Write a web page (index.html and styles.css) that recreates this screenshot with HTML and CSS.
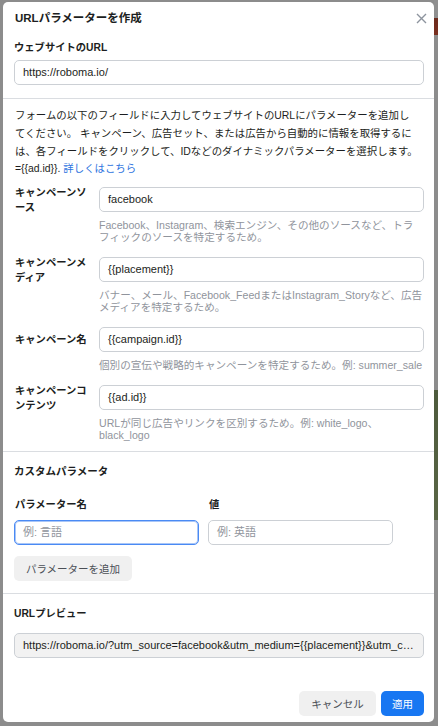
FILE: index.html
```html
<!DOCTYPE html>
<html lang="ja">
<head>
  <meta charset="UTF-8">
  <title>URLパラメーターを作成</title>
  <link rel="stylesheet" href="styles.css">
</head>
<body>
  <div class="modal">
    <!-- en-tête -->
    <div class="header">
      <h2>URLパラメーターを作成</h2>
      <button class="close" aria-label="閉じる">
        <svg width="11" height="11" viewBox="0 0 11 11"><path d="M1 1 L10 10 M10 1 L1 10" stroke="#8d949e" stroke-width="1.4" fill="none"/></svg>
      </button>
    </div>

    <div class="section site">
      <label class="lbl">ウェブサイトのURL</label>
      <div class="input">https://roboma.io/</div>
    </div>

    <div class="section fields">
      <p class="intro">フォームの以下のフィールドに入力してウェブサイトのURLにパラメーターを追加し<br>てください。 キャンペーン、広告セット、または広告から自動的に情報を取得するには、各フィールドをクリックして、IDなどのダイナミックパラメーターを選択します。={{ad.id}}. <a href="#">詳しくはこちら</a></p>

      <div class="row">
        <label class="lbl">キャンペーンソース</label>
        <div class="input">facebook</div>
        <div class="help">Facebook、Instagram、検索エンジン、その他のソースなど、トラフィックのソースを特定するため。</div>
      </div>
      <div class="row">
        <label class="lbl">キャンペーンメディア</label>
        <div class="input">{{placement}}</div>
        <div class="help">バナー、メール、Facebook_FeedまたはInstagram_Storyなど、広告メディアを特定するため。</div>
      </div>
      <div class="row">
        <label class="lbl">キャンペーン名</label>
        <div class="input">{{campaign.id}}</div>
        <div class="help">個別の宣伝や戦略的キャンペーンを特定するため。例: summer_sale</div>
      </div>
      <div class="row">
        <label class="lbl">キャンペーンコンテンツ</label>
        <div class="input">{{ad.id}}</div>
        <div class="help">URLが同じ広告やリンクを区別するため。例: white_logo、black_logo</div>
      </div>
    </div>

    <div class="section custom">
      <h3 class="lbl">カスタムパラメータ</h3>
      <div class="pair">
        <label class="lbl">パラメーター名</label>
        <label class="lbl">値</label>
        <div class="input focus placeholder">例: 言語</div>
        <div class="input placeholder">例: 英語</div>
      </div>
      <button class="btn grey add">パラメーターを追加</button>
    </div>

    <div class="section preview">
      <label class="lbl">URLプレビュー</label>
      <div class="input readonly"><span>https://roboma.io/?utm_source=facebook&amp;utm_medium={{placement}}&amp;utm_campaign={{campaign.id}}&amp;utm_content={{ad.id}}</span></div>
      <div class="footer">
        <button class="btn grey">キャンセル</button>
        <button class="btn blue">適用</button>
      </div>
    </div>
  </div>
</body>
</html>
```

FILE: styles.css
```css
body {
  margin: 0;
  padding: 2px 4px 4px 3px;
  font-family: "Liberation Sans", "Noto Sans CJK JP", sans-serif;
  color: #1c1e21;
  background: linear-gradient(to bottom, #8f8f8f 0, #8f8f8f 18px, #6b2a1c 18px, #7a2f20 35px, #8c8c8c 35px, #8c8c8c 390px, #4d5a3c 390px, #5a6646 520px, #8d8d8d 520px) right top / 4px 100% no-repeat, #8c8c8c;
}
.modal {
  background: #fff;
  width: 431px;
  height: 720px;
  border-radius: 5px;
  box-sizing: border-box;
  overflow: hidden;
}
.header {
  display: flex;
  justify-content: space-between;
  align-items: center;
  padding: 8px 7px 0 12px;
}
h2 {
  margin: 0;
  font-size: 11.5px;
  line-height: 16px;
  font-weight: bold;
}
.close {
  border: none;
  background: none;
  padding: 0;
  width: 12px;
  height: 12px;
  display: flex;
  align-items: center;
  justify-content: center;
}
.section {
  padding: 0 10px 0 11px;
  border-bottom: 1px solid #dadde1;
}
.lbl {
  display: block;
  margin: 0;
  font-size: 10.3px;
  line-height: 15px;
  font-weight: bold;
}
.input {
  height: 25px;
  box-sizing: border-box;
  border: 1px solid #ccd0d5;
  border-radius: 5px;
  padding: 0 8px;
  font-size: 11px;
  line-height: 23px;
  white-space: nowrap;
  overflow: hidden;
}
.site {
  padding-top: 14px;
  padding-bottom: 13px;
}
.site .lbl {
  margin-bottom: 5px;
}
.intro {
  margin: 0;
  padding: 8px 1px 0 1px;
  font-size: 10.42px;
  line-height: 17.8px;
}
.intro a {
  color: #2d73e0;
  text-decoration: none;
}
.fields {
  padding-bottom: 10px;
}
.row {
  display: grid;
  grid-template-columns: 76px 1fr;
  grid-template-rows: 25px auto;
  column-gap: 9px;
  margin-top: 14px;
}
.intro + .row {
  margin-top: 9px;
}
.row .lbl {
  align-self: center;
  padding-left: 1px;
}
.row .help {
  grid-column: 2;
  margin-top: 7px;
  font-size: 10.6px;
  line-height: 12px;
  line-break: strict;
  color: #90949c;
}
.custom {
  padding-top: 12px;
  padding-bottom: 12px;
}
.custom h3 {
  font-size: 10.5px;
}
.pair {
  display: grid;
  grid-template-columns: 185px 185px;
  column-gap: 9px;
  row-gap: 8px;
  margin-top: 18px;
}
.pair .lbl {
  padding-left: 1px;
}
.placeholder {
  color: #90949c;
}
.focus {
  border-color: #4a8af4;
  box-shadow: 0 0 0 1px #a9c6f7 inset;
}
.btn {
  font-family: inherit;
  font-size: 10.5px;
  height: 25px;
  border: none;
  border-radius: 5px;
  padding: 0 10px;
  white-space: nowrap;
  cursor: pointer;
}
.grey {
  background: #f0f0f0;
  color: #4b4f56;
}
.blue {
  background: #1877f2;
  color: #fff;
  padding: 0 11px;
}
.add {
  margin-top: 11px;
  width: 118px;
  padding: 0;
}
.preview {
  border-bottom: none;
  padding-top: 12px;
}
.preview .lbl {
  margin-bottom: 12px;
}
.readonly {
  background: #f2f2f2;
  color: #1c1e21;
}
.readonly span {
  display: block;
  overflow: hidden;
  text-overflow: ellipsis;
}
.footer {
  display: flex;
  justify-content: flex-end;
  gap: 5px;
  margin-top: 33px;
}
.footer .grey {
  width: 77px;
  padding: 0;
}
```
